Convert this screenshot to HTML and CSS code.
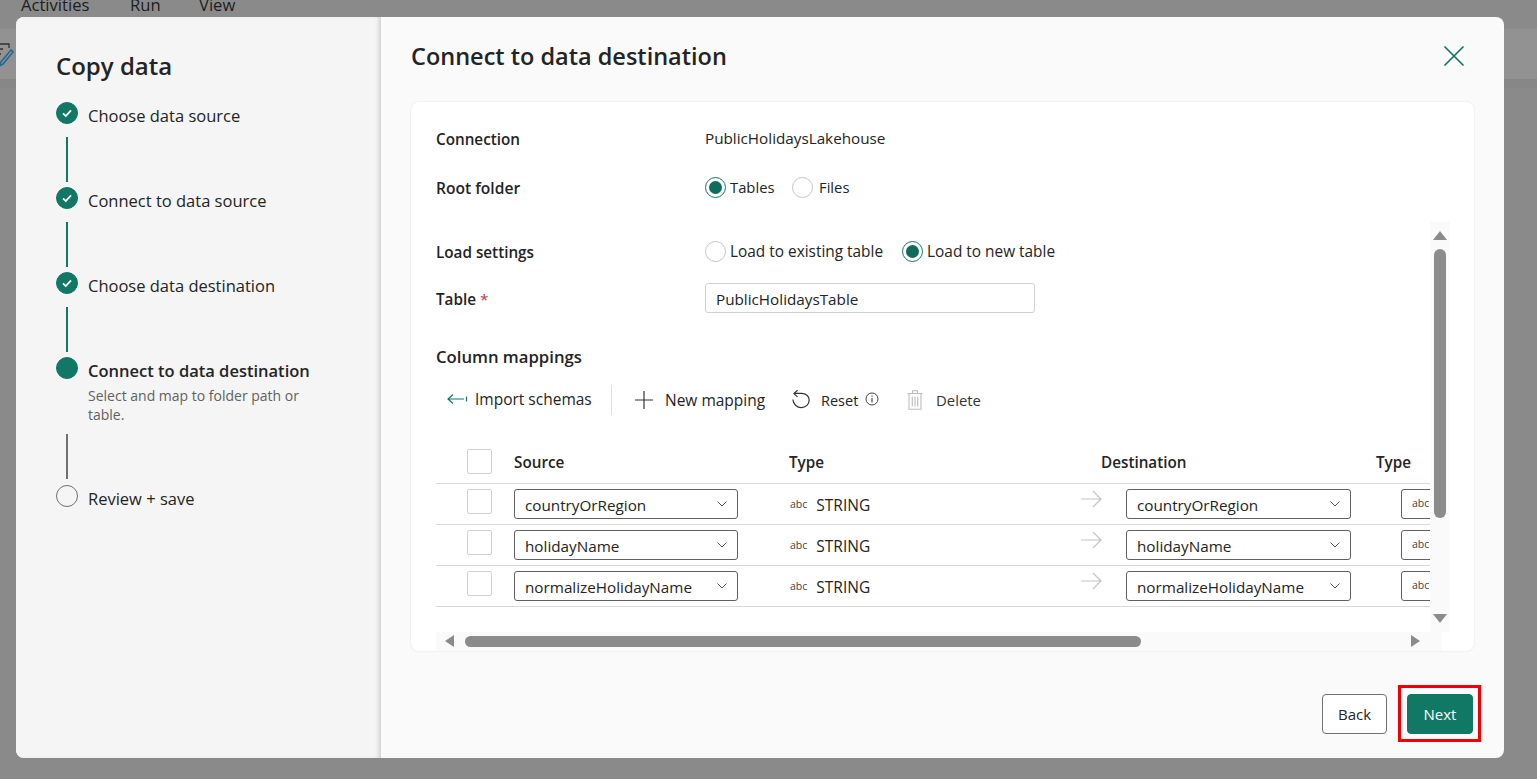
FILE: index.html
```html
<!DOCTYPE html>
<html lang="en">
<head>
    <meta charset="UTF-8">
    <meta name="viewport" content="width=device-width, initial-scale=1.0">
    <title>Copy data</title>
    <link rel="stylesheet" href="styles.css">
</head>
<body>
    <!-- Page behind the dialog -->
    <div class="backdrop">
        <ul class="menu">
            <li>Activities</li>
            <li>Run</li>
            <li>View</li>
        </ul>
        <div class="toolbar">
            <svg class="toolbar-icon" width="14" height="24" viewBox="0 0 14 24" fill="none">
                <path d="M-4 1H9V5M-4 6H3M-4 11H1" stroke="#333" stroke-width="1.3"/>
                <path d="M11 7L1 19L-1 23L3 21L13 9Z" stroke="#236a92" stroke-width="1.6"/>
            </svg>
        </div>
    </div>

    <div class="dialog">
        <!-- Steps -->
        <aside class="sidebar">
            <h2>Copy data</h2>
            <div class="step">
                <span class="dot done"><svg width="12" height="12" viewBox="0 0 12 12"><path d="M2 6.4L4.8 9L10 3.4" fill="none" stroke="#fff" stroke-width="1.8"/></svg></span>
                <span class="step-name">Choose data source</span>
            </div>
            <div class="connector"></div>
            <div class="step">
                <span class="dot done"><svg width="12" height="12" viewBox="0 0 12 12"><path d="M2 6.4L4.8 9L10 3.4" fill="none" stroke="#fff" stroke-width="1.8"/></svg></span>
                <span class="step-name">Connect to data source</span>
            </div>
            <div class="connector"></div>
            <div class="step">
                <span class="dot done"><svg width="12" height="12" viewBox="0 0 12 12"><path d="M2 6.4L4.8 9L10 3.4" fill="none" stroke="#fff" stroke-width="1.8"/></svg></span>
                <span class="step-name">Choose data destination</span>
            </div>
            <div class="connector"></div>
            <div class="step">
                <span class="dot done"></span>
                <div>
                    <span class="step-name current">Connect to data destination</span>
                    <p class="step-desc">Select and map to folder path or table.</p>
                </div>
            </div>
            <div class="connector pending"></div>
            <div class="step">
                <span class="dot"></span>
                <span class="step-name">Review + save</span>
            </div>
        </aside>

        <main class="content">
            <header class="content-head">
                <h1>Connect to data destination</h1>
                <svg class="close" width="22" height="22" viewBox="0 0 22 22"><path d="M1.5 1.5L20.5 20.5M20.5 1.5L1.5 20.5" stroke="#0f6f5e" stroke-width="1.6" fill="none"/></svg>
            </header>

            <section class="card">
                <div class="form-row row-connection">
                    <label>Connection</label>
                    <span class="value">PublicHolidaysLakehouse</span>
                </div>
                <div class="form-row row-root">
                    <label>Root folder</label>
                    <div class="radios">
                        <span class="radio on"></span><span class="radio-label">Tables</span>
                        <span class="radio"></span><span class="radio-label">Files</span>
                    </div>
                </div>
                <div class="form-row row-load">
                    <label>Load settings</label>
                    <div class="radios">
                        <span class="radio"></span><span class="radio-label">Load to existing table</span>
                        <span class="radio on"></span><span class="radio-label">Load to new table</span>
                    </div>
                </div>
                <div class="form-row row-table">
                    <label>Table <span class="required">*</span></label>
                    <div class="text-input">PublicHolidaysTable</div>
                </div>

                <h3>Column mappings</h3>
                <div class="actions">
                    <button class="action import">
                        <svg width="21" height="12" viewBox="0 0 21 12"><path d="M6 1.5L1 6L6 10.5M1 6H17M19.5 3.5V8.5" fill="none" stroke="#117865" stroke-width="1.2"/></svg>
                        Import schemas
                    </button>
                    <span class="divider"></span>
                    <button class="action new">
                        <svg width="20" height="20" viewBox="0 0 20 20"><path d="M10 1V19M1 10H19" stroke="#333" stroke-width="1.2"/></svg>
                        New mapping
                    </button>
                    <button class="action reset">
                        <svg width="20" height="20" viewBox="0 0 20 20"><path d="M1.8 9.5C2.3 14 5.8 17.6 10.4 17.6C14.8 17.6 18.2 14 18.2 10C18.2 6 14.8 3.4 10.6 3.4H3M6.5 0.3L2.9 3.6L6.5 6.9" fill="none" stroke="#333" stroke-width="1.2"/></svg>
                        Reset
                        <svg class="info" width="14" height="14" viewBox="0 0 14 14"><circle cx="7" cy="7" r="6" fill="none" stroke="#444" stroke-width="1"/><path d="M7 6V10.5M7 3.4V4.8" stroke="#444" stroke-width="1.1"/></svg>
                    </button>
                    <button class="action delete">
                        <svg width="16" height="20" viewBox="0 0 16 20"><path d="M0.5 3.5H15.5M5.5 3V0.8H10.5V3M2 3.5V19.3H14V3.5M5.3 6.5V16.5M8 6.5V16.5M10.7 6.5V16.5" fill="none" stroke="#bdbdbd" stroke-width="1.1"/></svg>
                        Delete
                    </button>
                </div>

                <div class="mapping">
                    <div class="mapping-head">
                        <span class="cell-check"><span class="checkbox"></span></span>
                        <span>Source</span>
                        <span>Type</span>
                        <span>Destination</span>
                        <span>Type</span>
                    </div>
                    <div class="mapping-row">
                        <span class="cell-check"><span class="checkbox"></span></span>
                        <div class="select">countryOrRegion<svg width="10" height="6" viewBox="0 0 10 6"><path d="M0.5 0.5L5 5L9.5 0.5" fill="none" stroke="#555"/></svg></div>
                        <div class="type"><span class="abc">abc</span>STRING</div>
                        <svg class="flow" width="21" height="18" viewBox="0 0 21 18"><path d="M0 9H20M12 1L20 9L12 17" fill="none" stroke="#c4c4c4" stroke-width="1.2"/></svg>
                        <div class="select">countryOrRegion<svg width="10" height="6" viewBox="0 0 10 6"><path d="M0.5 0.5L5 5L9.5 0.5" fill="none" stroke="#555"/></svg></div>
                        <div class="select type-select"><span class="abc">abc</span></div>
                    </div>
                    <div class="mapping-row">
                        <span class="cell-check"><span class="checkbox"></span></span>
                        <div class="select">holidayName<svg width="10" height="6" viewBox="0 0 10 6"><path d="M0.5 0.5L5 5L9.5 0.5" fill="none" stroke="#555"/></svg></div>
                        <div class="type"><span class="abc">abc</span>STRING</div>
                        <svg class="flow" width="21" height="18" viewBox="0 0 21 18"><path d="M0 9H20M12 1L20 9L12 17" fill="none" stroke="#c4c4c4" stroke-width="1.2"/></svg>
                        <div class="select">holidayName<svg width="10" height="6" viewBox="0 0 10 6"><path d="M0.5 0.5L5 5L9.5 0.5" fill="none" stroke="#555"/></svg></div>
                        <div class="select type-select"><span class="abc">abc</span></div>
                    </div>
                    <div class="mapping-row">
                        <span class="cell-check"><span class="checkbox"></span></span>
                        <div class="select">normalizeHolidayName<svg width="10" height="6" viewBox="0 0 10 6"><path d="M0.5 0.5L5 5L9.5 0.5" fill="none" stroke="#555"/></svg></div>
                        <div class="type"><span class="abc">abc</span>STRING</div>
                        <svg class="flow" width="21" height="18" viewBox="0 0 21 18"><path d="M0 9H20M12 1L20 9L12 17" fill="none" stroke="#c4c4c4" stroke-width="1.2"/></svg>
                        <div class="select">normalizeHolidayName<svg width="10" height="6" viewBox="0 0 10 6"><path d="M0.5 0.5L5 5L9.5 0.5" fill="none" stroke="#555"/></svg></div>
                        <div class="select type-select"><span class="abc">abc</span></div>
                    </div>
                </div>

                <!-- Scrollbars -->
                <div class="vscroll">
                    <span class="arrow-up"></span>
                    <span class="vthumb"></span>
                    <span class="arrow-down"></span>
                </div>
                <div class="hscroll">
                    <span class="arrow-left"></span>
                    <span class="hthumb"></span>
                    <span class="arrow-right"></span>
                </div>
            </section>

            <footer class="footer">
                <button class="btn">Back</button>
                <button class="btn primary">Next</button>
            </footer>
            <div class="highlight"></div>
        </main>
    </div>
</body>
</html>
```

FILE: styles.css
```css
* {
    box-sizing: border-box;
    margin: 0;
    padding: 0;
}

html, body {
    height: 100%;
    overflow: hidden;
}

body {
    font-family: "Open Sans", "Noto Sans", sans-serif;
    font-size: 15.25px;
    color: #242424;
    background-color: #8a8a8a;
}

/* page behind the dialog */
.backdrop {
    height: 100%;
}

.menu {
    list-style: none;
    display: flex;
    height: 29px;
    padding-left: 21px;
    margin-top: -9px;
    color: #1d1d1d;
    font-size: 16.6px;
    line-height: 28px;
}

.menu li:nth-child(1) { width: 109px; }
.menu li:nth-child(2) { width: 69px; }

.toolbar {
    height: 59px;
    margin-top: 9px;
    background-color: #929292;
    border-bottom: 9px solid #878787;
    padding-top: 14px;
}

.toolbar-icon {
    display: block;
}

/* dialog */
.dialog {
    position: absolute;
    left: 16px;
    top: 17px;
    width: 1488px;
    height: 741px;
    display: flex;
    border-radius: 8px;
    overflow: hidden;
    background-color: #fafafa;
}

.sidebar {
    width: 365px;
    flex-shrink: 0;
    background-color: #f5f5f5;
    padding: 31px 40px 0;
    box-shadow: inset -4px 0 4px -2px rgba(0, 0, 0, 0.16);
    position: relative;
}

.sidebar h2 {
    font-size: 24px;
    font-weight: 600;
    line-height: 36px;
    margin-bottom: 18px;
}

.step {
    display: flex;
    gap: 10px;
    align-items: flex-start;
}

.dot {
    width: 22px;
    height: 22px;
    flex-shrink: 0;
    border-radius: 50%;
    border: 1px solid #707070;
    display: flex;
    align-items: center;
    justify-content: center;
}

.dot.done {
    background-color: #117865;
    border-color: #117865;
}

.step-name {
    display: block;
    font-size: 16.5px;
    line-height: 26px;
    padding-top: 1px;
    margin-bottom: -5px;
}

.step-name.current {
    font-weight: 600;
}

.step-desc {
    font-size: 14px;
    line-height: 19px;
    color: #616161;
    width: 235px;
    margin-top: 7px;
}

.connector {
    width: 2px;
    height: 45px;
    margin: 13px 0 5px 10px;
    background-color: #117865;
}

.connector.pending {
    background-color: #707070;
    margin-top: 10px;
    margin-bottom: 6px;
}

/* main area */
.content {
    flex: 1;
    padding: 0 30px;
    position: relative;
}

.content-head {
    height: 85px;
    display: flex;
    justify-content: space-between;
    align-items: flex-start;
    padding-top: 21px;
}

.content-head h1 {
    font-size: 23.5px;
    font-weight: 600;
    line-height: 36px;
}

.close {
    margin-top: 7px;
    margin-right: 9px;
}

.card {
    position: relative;
    height: 549px;
    background-color: #fff;
    border-radius: 8px;
    box-shadow: 0 0 2px rgba(0, 0, 0, 0.12);
    padding: 24px 0 0 25px;
}

.form-row {
    display: grid;
    grid-template-columns: 269px 1fr;
    align-items: center;
    height: 26px;
}

.form-row label {
    font-weight: 600;
}

.value {
    margin-top: -2px;
}

.row-root {
    margin-top: 22px;
}

.row-root label {
    font-size: 15.6px;
    margin-top: 1px;
}

.row-root .radios {
    margin-top: 0;
    font-size: 14.8px;
}

.row-root .radio-label {
    margin-right: 18px;
    width: 44px;
    white-space: nowrap;
}

.row-root .radio-label + .radio {
    margin-right: 6px;
}

.row-load {
    margin-top: 39px;
}

.row-load .radio-label {
    font-size: 15.4px;
    margin-right: 19px;
}

.row-table {
    margin-top: 18px;
    height: 30px;
}

.row-table label {
    margin-top: 1px;
}

.required {
    color: #c4314b;
    font-weight: 400;
}

.radios {
    display: flex;
    align-items: center;
    margin-top: -2px;
}

.radio {
    width: 21px;
    height: 21px;
    border-radius: 50%;
    border: 1px solid #c4c4c4;
    background-color: #fff;
    display: flex;
    align-items: center;
    justify-content: center;
    margin-right: 4px;
}

.radio.on {
    border-color: #117865;
}

.radio.on::after {
    content: "";
    width: 13px;
    height: 13px;
    border-radius: 50%;
    background-color: #0f6b5b;
}

.text-input {
    width: 330px;
    height: 30px;
    border: 1px solid #d1d1d1;
    border-radius: 3px;
    padding: 0 10px;
    line-height: 30px;
}

.card h3 {
    font-size: 16.7px;
    font-weight: 600;
    line-height: 24px;
    margin-top: 32px;
}

.actions {
    display: flex;
    align-items: center;
    height: 40px;
    margin-top: 11px;
}

.action {
    display: flex;
    align-items: center;
    border: none;
    background: none;
    font-family: inherit;
    font-size: 14.5px;
    color: #242424;
}

.action.import {
    padding-left: 11px;
    gap: 7px;
    font-size: 15.5px;
    margin-top: -2px;
    width: 175px;
}

.divider {
    width: 1px;
    height: 30px;
    background-color: #e0e0e0;
    margin-right: 22px;
}

.action.new {
    gap: 11px;
    width: 157px;
    font-size: 15.5px;
}

.action.reset {
    gap: 10px;
    width: 116px;
}

.info {
    margin-left: -3px;
    margin-top: -3px;
}

.action.delete {
    gap: 13px;
    color: #333;
    font-size: 14.9px;
}

.mapping {
    width: 994px;
    height: 166px;
    margin-top: 21px;
    overflow: hidden;
}

.mapping-head {
    display: grid;
    grid-template-columns: 78px 275px 312px 275px 1fr;
    align-items: center;
    height: 43px;
    padding-bottom: 1px;
    border-bottom: 1px solid #d9d9d9;
    font-weight: 600;
    white-space: nowrap;
}

.mapping-row {
    display: grid;
    grid-template-columns: 78px 275px 292px 45px 275px 1fr;
    align-items: start;
    height: 41px;
    padding-top: 5px;
    border-bottom: 1px solid #d9d9d9;
    white-space: nowrap;
}

.cell-check {
    padding-left: 31px;
    display: block;
}

.checkbox {
    display: block;
    width: 25px;
    height: 25px;
    border: 1px solid #d1d1d1;
    border-radius: 2px;
    background-color: #fff;
}

.select {
    width: 225px;
    height: 30px;
    border: 1px solid #616161;
    border-radius: 3px;
    padding: 0 10px;
    line-height: 31px;
    display: flex;
    justify-content: space-between;
    align-items: flex-start;
}

.mapping-row > .select:nth-child(2) {
    width: 224px;
}

.select svg {
    margin-top: 11px;
}

.type-select {
    width: 100px;
}

.type {
    line-height: 30px;
    display: flex;
    align-items: center;
    padding-left: 1px;
    margin-top: 1px;
    font-size: 15.5px;
}

.abc {
    font-size: 10.5px;
    color: #444;
    margin-right: 9px;
    margin-top: -3px;
}

.type-select .abc {
    margin-top: -2px;
}

.flow {
    margin-top: 1px;
}

/* scrollbars */
.vscroll {
    position: absolute;
    left: 1019px;
    top: 120px;
    width: 20px;
    height: 410px;
    background-color: #fafafa;
}

.vthumb {
    position: absolute;
    left: 4px;
    top: 27px;
    width: 12px;
    height: 269px;
    border-radius: 6px;
    background-color: #8b8b8b;
}

.arrow-up,
.arrow-down {
    position: absolute;
    left: 3px;
    width: 0;
    height: 0;
    border-left: 7px solid transparent;
    border-right: 7px solid transparent;
}

.arrow-up {
    top: 9px;
    border-bottom: 9px solid #8b8b8b;
}

.arrow-down {
    top: 392px;
    border-top: 9px solid #8b8b8b;
}

.hscroll {
    position: absolute;
    left: 25px;
    top: 530px;
    width: 1005px;
    height: 19px;
    background-color: #fafafa;
}

.hthumb {
    position: absolute;
    left: 29px;
    top: 4px;
    width: 676px;
    height: 11px;
    border-radius: 6px;
    background-color: #8b8b8b;
}

.arrow-left,
.arrow-right {
    position: absolute;
    top: 3px;
    width: 0;
    height: 0;
    border-top: 6px solid transparent;
    border-bottom: 6px solid transparent;
}

.arrow-left {
    left: 9px;
    border-right: 9px solid #8b8b8b;
}

.arrow-right {
    left: 975px;
    border-left: 9px solid #8b8b8b;
}

/* footer */
.footer {
    display: flex;
    justify-content: flex-end;
    gap: 20px;
    margin-top: 43px;
    padding-right: 1px;
}

.btn {
    width: 65px;
    height: 40px;
    border: 1px solid #707070;
    border-radius: 4px;
    background-color: #fff;
    font-family: inherit;
    font-size: 15px;
    color: #242424;
}

.btn.primary {
    width: 66px;
    border-color: #117865;
    background-color: #117865;
    color: #fff;
}

.highlight {
    position: absolute;
    left: 1017px;
    top: 668px;
    width: 83px;
    height: 57px;
    border: 3px solid #f00000;
}
```
